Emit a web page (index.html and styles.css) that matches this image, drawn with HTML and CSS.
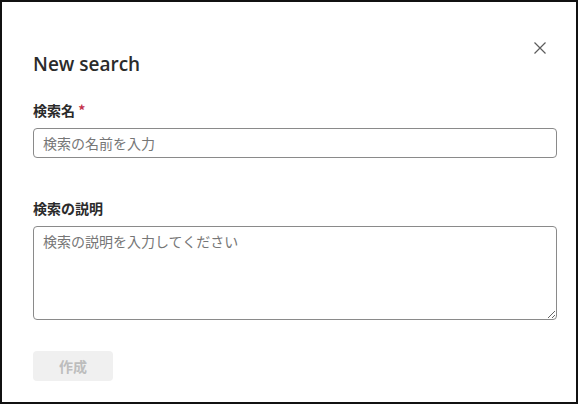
FILE: index.html
```html
<!DOCTYPE html>
<html lang="ja">
<head>
  <meta charset="UTF-8" />
  <meta name="viewport" content="width=device-width, initial-scale=1.0"/>
  <title>New search</title>
  <link rel="stylesheet" href="styles.css">
</head>
<body>

  <div class="dialog">
    <div class="header">
      <h1>New search</h1>
      <button class="close" aria-label="閉じる">
        <svg width="12" height="12" viewBox="0 0 12 12">
          <path d="M0.5 0.5 L11.5 11.5 M11.5 0.5 L0.5 11.5" stroke="#5c5c5c" stroke-width="1.2" fill="none"/>
        </svg>
      </button>
    </div>

    <label class="label" for="nombre">検索名 <span class="req">*</span></label>
    <input type="text" id="nombre" class="field" placeholder="検索の名前を入力" />

    <label class="label second" for="descripcion">検索の説明</label>
    <textarea id="descripcion" class="field area" placeholder="検索の説明を入力してください"></textarea>

    <button class="crear" disabled>作成</button>
  </div>

</body>
</html>
```

FILE: styles.css
```css
body {
  margin: 0;
  font-family: "Noto Sans", "Noto Sans CJK JP", sans-serif;
  color: #242424;
  background: #fff;
}

.dialog {
  width: 578px;
  height: 404px;
  box-sizing: border-box;
  border: 2px solid #111;
  padding: 0 19px 0 31px;
  display: flex;
  flex-direction: column;
}

.header {
  display: flex;
  justify-content: space-between;
  align-items: flex-start;
  padding-top: 40px;
}

h1 {
  margin: 8px 0 0;
  font-family: "Open Sans", "Noto Sans", sans-serif;
  font-size: 19px;
  line-height: 28px;
  font-weight: 600;
  color: #2b2b2b;
}

.close {
  background: none;
  border: none;
  padding: 0;
  margin-right: 11px;
  width: 12px;
  height: 12px;
  display: flex;
  cursor: pointer;
}

.label {
  display: block;
  margin-top: 22px;
  margin-bottom: 8px;
  font-size: 14px;
  line-height: 20px;
  font-weight: 700;
  font-family: "Noto Sans CJK JP", sans-serif;
  color: #2b2b2b;
}

.label.second {
  margin-top: 40px;
}

.req {
  color: #c4314b;
}

.field {
  box-sizing: border-box;
  width: 524px;
  height: 30px;
  margin: 0;
  border: 1px solid #8a8a8a;
  border-radius: 4px;
  padding: 0 9px;
  font-family: "Noto Sans CJK JP", sans-serif;
  font-size: 14px;
  color: #242424;
  outline: none;
}

.field::placeholder {
  color: #767676;
}

.area {
  height: 94px;
  padding-top: 3px;
  line-height: 22px;
  resize: vertical;
  display: block;
}

.crear {
  margin-top: 31px;
  width: 80px;
  height: 30px;
  border: none;
  border-radius: 4px;
  background-color: #f0f0f0;
  color: #bdbdbd;
  font-family: "Noto Sans CJK JP", sans-serif;
  font-size: 14px;
  font-weight: 700;
  padding: 0;
}
```
